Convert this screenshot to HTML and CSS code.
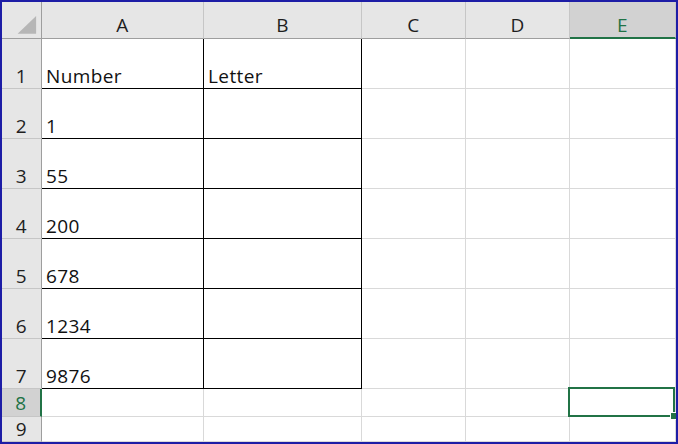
FILE: index.html
```html
<!DOCTYPE html>
<html>
<head>
<meta charset="utf-8">
<link rel="stylesheet" href="styles.css">
<title>Sheet1</title>
</head>
<body>
<div class="frame">
  <div class="sheet">
    <!-- column header row -->
    <div class="hdr corner">
      <svg width="40" height="37" viewBox="0 0 40 37"><polygon points="16,32 35,32 35,14" fill="#b6b6b6"/></svg>
    </div>
    <div class="hdr col">A</div>
    <div class="hdr col">B</div>
    <div class="hdr col">C</div>
    <div class="hdr col">D</div>
    <div class="hdr col active-col">E</div>

    <div class="hdr row">1</div>
    <div class="cell boxed">Number</div>
    <div class="cell boxed">Letter</div>
    <div class="cell"></div><div class="cell"></div><div class="cell"></div>

    <div class="hdr row">2</div>
    <div class="cell boxed">1</div>
    <div class="cell boxed"></div>
    <div class="cell"></div><div class="cell"></div><div class="cell"></div>

    <div class="hdr row">3</div>
    <div class="cell boxed">55</div>
    <div class="cell boxed"></div>
    <div class="cell"></div><div class="cell"></div><div class="cell"></div>

    <div class="hdr row">4</div>
    <div class="cell boxed">200</div>
    <div class="cell boxed"></div>
    <div class="cell"></div><div class="cell"></div><div class="cell"></div>

    <div class="hdr row">5</div>
    <div class="cell boxed">678</div>
    <div class="cell boxed"></div>
    <div class="cell"></div><div class="cell"></div><div class="cell"></div>

    <div class="hdr row">6</div>
    <div class="cell boxed">1234</div>
    <div class="cell boxed"></div>
    <div class="cell"></div><div class="cell"></div><div class="cell"></div>

    <div class="hdr row">7</div>
    <div class="cell boxed">9876</div>
    <div class="cell boxed"></div>
    <div class="cell"></div><div class="cell"></div><div class="cell"></div>

    <div class="hdr row active-row">8</div>
    <div class="cell"></div>
    <div class="cell"></div>
    <div class="cell"></div><div class="cell"></div>
    <div class="cell selected"><span class="handle"></span></div>

    <div class="hdr row">9</div>
    <div class="cell"></div>
    <div class="cell"></div>
    <div class="cell"></div><div class="cell"></div><div class="cell"></div>
  </div>
</div>
</body>
</html>
```

FILE: styles.css
```css
html, body {
  margin: 0;
  padding: 0;
  background: #ffffff;
}

.frame {
  width: 678px;
  height: 444px;
  box-sizing: border-box;
  border: 2px solid #1d1da6;
  overflow: hidden;
}

.sheet {
  display: grid;
  grid-template-columns: 40px 162px 158px 104px 104px 106px;
  grid-template-rows: 37px 50px 50px 50px 50px 50px 50px 50px 28px 25px;
  font-family: "Open Sans", "Noto Sans", sans-serif;
  font-weight: 400;
  font-size: 19px;
  letter-spacing: 0.4px;
  color: #111111;
}

.hdr {
  box-sizing: border-box;
  background: #e6e6e6;
  color: #1e1e1e;
  display: flex;
  align-items: flex-end;
  justify-content: center;
  line-height: 1;
}

.corner {
  padding: 0;
  align-items: stretch;
  justify-content: stretch;
  border-right: 1px solid #9e9e9e;
  border-bottom: 1px solid #9e9e9e;
}

.corner svg {
  display: block;
}

.col {
  border-right: 1px solid #c6c6c6;
  border-bottom: 1px solid #9e9e9e;
  padding-bottom: 3px;
}

.row {
  border-right: 1px solid #9e9e9e;
  border-bottom: 1px solid #c6c6c6;
  padding-bottom: 2px;
}

.active-col {
  background: #d2d2d2;
  color: #217346;
  border-bottom: 2px solid #217346;
  padding-bottom: 2px;
}

.active-row {
  background: #d2d2d2;
  color: #217346;
  border-right: 2px solid #217346;
  padding-bottom: 3px;
}

.cell {
  box-sizing: border-box;
  border-right: 1px solid #d9d9d9;
  border-bottom: 1px solid #d9d9d9;
  display: flex;
  align-items: flex-end;
  padding: 0 0 2px 4px;
  line-height: 1;
  white-space: nowrap;
}

.cell.boxed {
  border-right-color: #000000;
  border-bottom-color: #000000;
}

.selected {
  position: relative;
}

.selected::before {
  content: "";
  position: absolute;
  left: -2px;
  top: -2px;
  right: 0;
  bottom: -1px;
  border: 2px solid #217346;
}

.handle {
  position: absolute;
  right: -3px;
  bottom: -4px;
  width: 6px;
  height: 6px;
  background: #217346;
  border: 1px solid #ffffff;
  z-index: 2;
}
```
